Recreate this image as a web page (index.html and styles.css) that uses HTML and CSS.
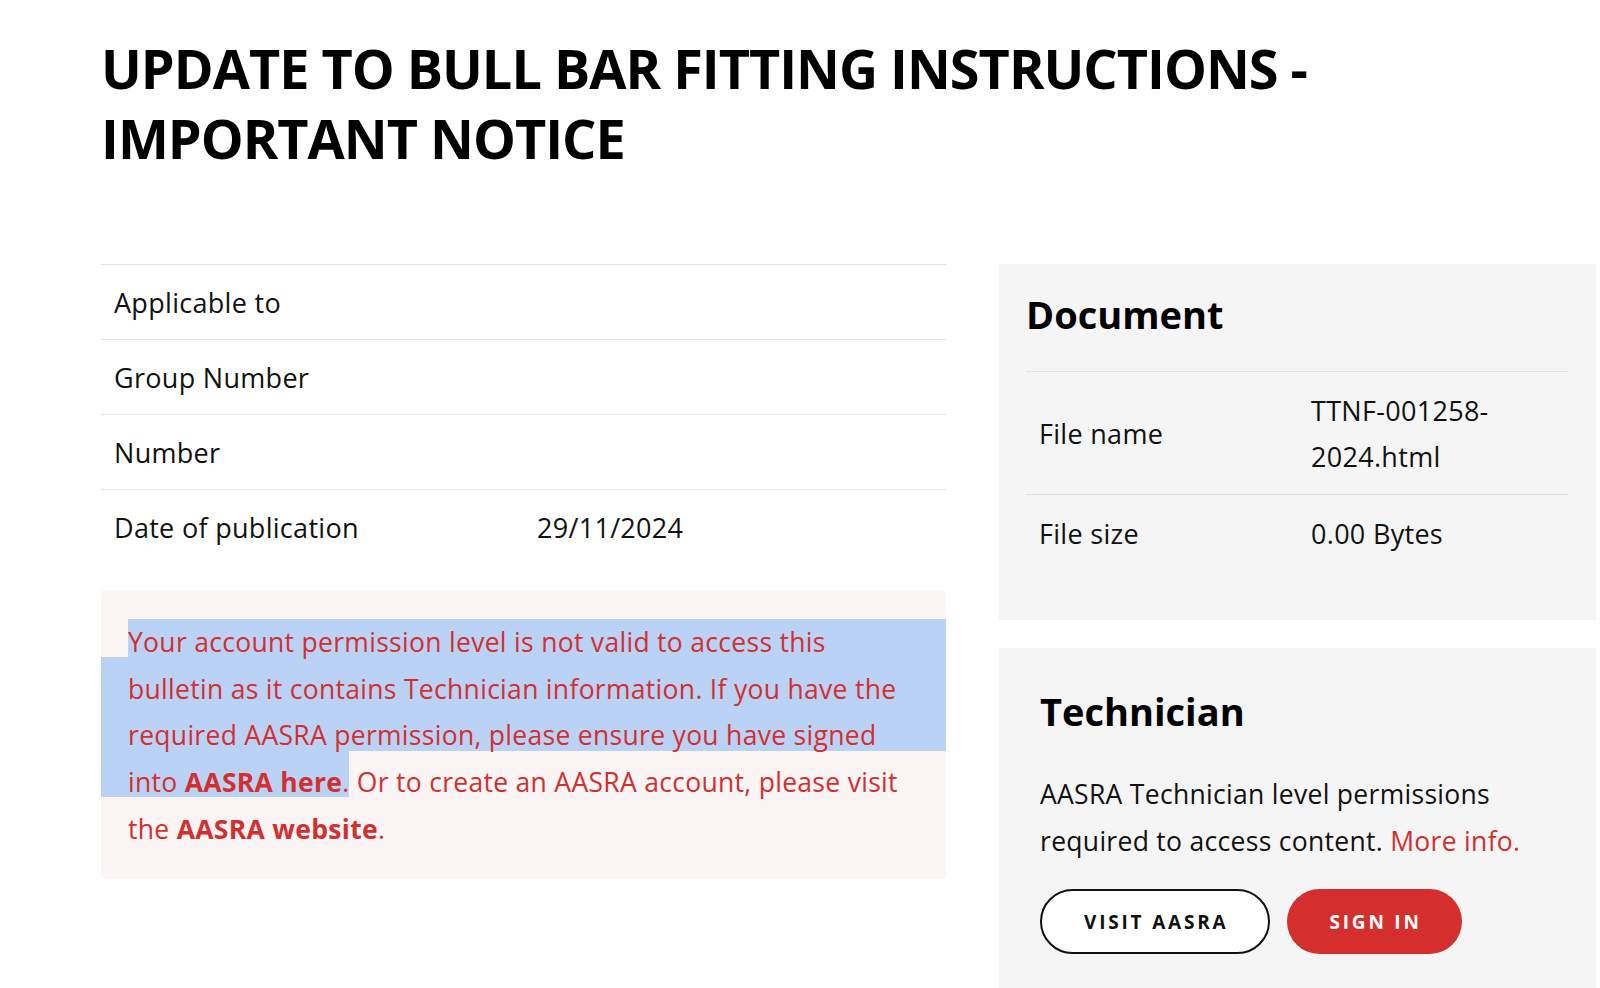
FILE: index.html
```html
<!doctype html>
<html>

<head>
    <title>Update to Bull Bar Fitting Instructions - Important Notice</title>
    <link rel="stylesheet" href="styles.css">
</head>

<body>
    <div class="page">
        <h1 class="title">UPDATE TO BULL BAR FITTING INSTRUCTIONS - IMPORTANT NOTICE</h1>

        <div class="content">
            <div class="main-col">
                <div class="details">
                    <div class="detail-row">
                        <span class="detail-label">Applicable to</span>
                        <span class="detail-value"></span>
                    </div>
                    <div class="detail-row">
                        <span class="detail-label">Group Number</span>
                        <span class="detail-value"></span>
                    </div>
                    <div class="detail-row">
                        <span class="detail-label">Number</span>
                        <span class="detail-value"></span>
                    </div>
                    <div class="detail-row">
                        <span class="detail-label">Date of publication</span>
                        <span class="detail-value">29/11/2024</span>
                    </div>
                </div>

                <div class="notice">
                    <div class="selection-mark"></div>
                    <p class="notice-text">Your account permission level is not valid to access this<br>
                        bulletin as it contains Technician information. If you have the<br>
                        required AASRA permission, please ensure you have signed<br>
                        into <a href="#">AASRA here</a>. Or to create an AASRA account, please visit<br>
                        the <a href="#">AASRA website</a>.</p>
                </div>
            </div>

            <aside class="side-col">
                <section class="panel doc-panel">
                    <h2 class="panel-title">Document</h2>
                    <div class="doc-row">
                        <span class="doc-label">File name</span>
                        <span class="doc-value">TTNF-001258-2024.html</span>
                    </div>
                    <div class="doc-row">
                        <span class="doc-label">File size</span>
                        <span class="doc-value">0.00 Bytes</span>
                    </div>
                </section>

                <section class="panel tech-panel">
                    <h2 class="panel-title">Technician</h2>
                    <p class="tech-text">AASRA Technician level permissions required to access content. <a href="#">More info.</a></p>
                    <div class="btn-row">
                        <a class="btn btn-outline" href="#">VISIT AASRA</a>
                        <a class="btn btn-red" href="#">SIGN IN</a>
                    </div>
                </section>
            </aside>
        </div>
    </div>
</body>

</html>
```

FILE: styles.css
```css
html,
body {
    margin: 0;
    overflow: hidden;
}

body {
    font-family: "Open Sans", Arial, sans-serif;
    color: #111;
    background: #fff;
}

a {
    color: #d52f2d;
    text-decoration: none;
}

.page {
    padding: 33px 4px 0 101px;
}

.title {
    margin: 0;
    max-width: 1260px;
    font-size: 54px;
    line-height: 70px;
    font-weight: 700;
    letter-spacing: -1px;
    color: #000;
}

.content {
    display: grid;
    grid-template-columns: 845px 597px;
    column-gap: 53px;
    margin-top: 91px;
}

/* details table */

.detail-row {
    display: grid;
    grid-template-columns: 423px 1fr;
    padding: 15px 14px 13px 13px;
    border-top: 1px solid #e2e2e2;
    font-size: 27px;
    line-height: 46px;
    letter-spacing: 0.3px;
}

.notice {
    position: relative;
    margin-top: 26px;
    background: #fbf5f5;
    border-radius: 4px;
}

/* text selection left in the screenshot */
.selection-mark {
    position: absolute;
    inset: 0;
    background: #b9d2f6;
    clip-path: polygon(27px 29px, 845px 29px, 845px 161px, 248px 161px, 248px 207px, 0 207px, 0 67px, 27px 67px);
}

.notice-text {
    position: relative;
    margin: 0;
    padding: 29px 20px 26px 27px;
    font-size: 26.5px;
    line-height: 46.7px;
    letter-spacing: 0.3px;
    color: #d52f2d;
}

.notice-text a {
    font-weight: 700;
}

/* side panels */

.side-col {
    display: flex;
    flex-direction: column;
    gap: 28px;
}

.panel {
    background: #f5f5f5;
}

.panel-title {
    margin: 0;
    font-size: 38px;
    line-height: 44px;
    font-weight: 700;
    color: #000;
}

.doc-panel {
    padding: 28px 27px 49px 27px;
}

.doc-panel .panel-title {
    margin-bottom: 35px;
}

.doc-row {
    display: grid;
    grid-template-columns: 272px 1fr;
    align-items: center;
    padding: 16px 14px 14px 13px;
    border-top: 1px solid #e2e2e2;
    font-size: 27px;
    line-height: 46px;
    letter-spacing: 0.3px;
}

.tech-panel {
    padding: 41px 27px 35px 41px;
}

.tech-text {
    margin: 38px 0 0;
    font-size: 26.5px;
    line-height: 46.5px;
    letter-spacing: 0.3px;
}

.btn-row {
    display: flex;
    gap: 17px;
    margin-top: 25px;
}

.btn {
    display: inline-flex;
    align-items: center;
    height: 65px;
    padding: 0 40px 0 42px;
    box-sizing: border-box;
    border-radius: 33px;
    font-size: 19px;
    font-weight: 700;
    letter-spacing: 2.8px;
}

.btn-outline {
    border: 2px solid #111;
    background: #fff;
    color: #111;
}

.btn-red {
    background: #d52f2d;
    color: #fff;
}
```
